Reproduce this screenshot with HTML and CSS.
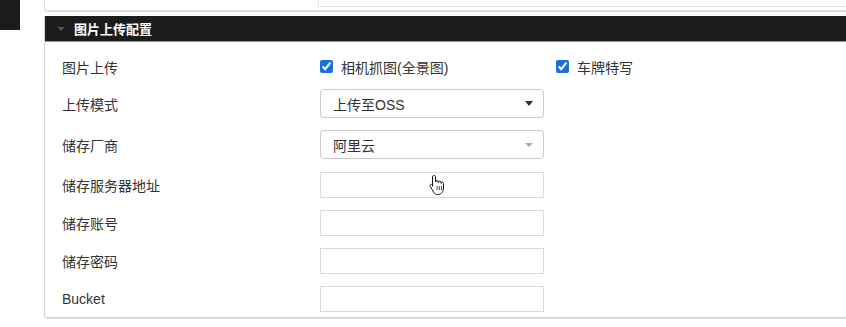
FILE: index.html
```html
<!DOCTYPE html>
<html lang="zh">
<head>
<meta charset="utf-8">
<link rel="stylesheet" href="styles.css">
</head>
<body>
<div class="page">
  <div class="side"><div class="side-block"></div></div>
  <div class="main">
    <div class="prev-panel"><div class="prev-input"></div></div>
    <div class="panel">
      <div class="panel-head"><span class="tri"></span><span class="title">图片上传配置</span></div>
      <div class="panel-body">
        <div class="row row-check">
          <div class="label">图片上传</div>
          <div class="ctrl checks">
            <label class="chk"><input type="checkbox" checked><span>相机抓图(全景图)</span></label>
            <label class="chk"><input type="checkbox" checked><span>车牌特写</span></label>
          </div>
        </div>
        <div class="row">
          <div class="label">上传模式</div>
          <div class="ctrl"><div class="select"><span>上传至OSS</span><span class="caret"></span></div></div>
        </div>
        <div class="row">
          <div class="label">储存厂商</div>
          <div class="ctrl"><div class="select"><span>阿里云</span><span class="caret light"></span></div></div>
        </div>
        <div class="row row-first-input">
          <div class="label">储存服务器地址</div>
          <div class="ctrl"><div class="input"></div></div>
        </div>
        <div class="row">
          <div class="label">储存账号</div>
          <div class="ctrl"><div class="input"></div></div>
        </div>
        <div class="row">
          <div class="label">储存密码</div>
          <div class="ctrl"><div class="input"></div></div>
        </div>
        <div class="row">
          <div class="label">Bucket</div>
          <div class="ctrl"><div class="input"></div></div>
        </div>
      </div>
    </div>
  </div>
</div>
<svg class="cursor" width="16" height="22" viewBox="0 0 16 22">
  <path d="M5 1.5 C5.9 1.5 6.5 2.1 6.5 3 V8 C6.5 7.2 7.1 6.6 7.9 6.6 C8.7 6.6 9.3 7.2 9.3 8 V8.6 C9.3 7.8 9.9 7.2 10.7 7.2 C11.5 7.2 12.1 7.8 12.1 8.6 V9.4 C12.1 8.7 12.6 8.2 13.3 8.2 C14 8.2 14.5 8.7 14.5 9.4 V14 C14.5 17 12.5 20.5 9.2 20.5 H8.6 C6.8 20.5 5.6 19.7 4.6 18.2 L1.3 12.5 C0.8 11.7 1 10.9 1.7 10.5 C2.4 10.1 3.1 10.4 3.6 11 L3.5 12.3 V3 C3.5 2.1 4.1 1.5 5 1.5 Z" fill="#fff" stroke="#111" stroke-width="1"/>
  <path d="M8 12v4M10.3 12v4M12.6 12v4" stroke="#111" stroke-width="0.8"/>
</svg>
</body>
</html>
```
FILE: styles.css
```css
html, body {
  margin: 0;
  padding: 0;
  background: #fff;
  overflow: hidden;
}
body {
  width: 846px;
  height: 327px;
  position: relative;
  font-family: "Liberation Sans", "Noto Sans CJK SC", sans-serif;
  font-size: 14px;
  color: #333;
}
.page {
  display: flex;
  gap: 24px;
}
.side {
  width: 20px;
  flex: none;
}
.side-block {
  width: 20px;
  height: 30px;
  background: #1b1b1b;
}
.main {
  width: 830px;
  flex: none;
}
.prev-panel {
  height: 12px;
  border-left: 1px solid #ddd;
  border-bottom: 2px solid #ddd;
  border-bottom-left-radius: 3px;
  box-sizing: border-box;
  padding-left: 273px;
}
.prev-input {
  height: 7px;
  border-left: 1px solid #e2e2e2;
  border-bottom: 1px solid #e2e2e2;
  box-sizing: border-box;
}
.panel {
  margin-top: 4px;
  border-left: 1px solid #d4d4d4;
  border-bottom: 2px solid #d8d8d8;
  border-bottom-left-radius: 4px;
}
.panel-head {
  height: 25px;
  background: #1c1c1c;
  border-bottom: 1px solid #999;
  display: flex;
  align-items: center;
  padding-left: 12px;
  gap: 9px;
}
.tri {
  width: 0;
  height: 0;
  border-left: 4px solid transparent;
  border-right: 4px solid transparent;
  border-top: 4px solid #555;
}
.title {
  color: #fff;
  font-weight: bold;
  font-size: 13px;
}
.panel-body {
  padding: 14px 0 5px 17px;
  display: flex;
  flex-direction: column;
  gap: 12px;
}
.row {
  display: flex;
  align-items: center;
}
.row-check {
  height: 21px;
}
.row-first-input {
  margin-top: 1px;
}
.label {
  width: 258px;
  flex: none;
  font-size: 14px;
  color: #333;
}
.ctrl {
  width: 224px;
  flex: none;
}
.checks {
  display: flex;
  width: 320px;
}
.chk {
  display: flex;
  align-items: center;
  gap: 8px;
  width: 236px;
  flex: none;
  font-size: 14px;
  color: #333;
}
.chk input {
  margin: 0;
  width: 13px;
  height: 13px;
  accent-color: #1a6fd9;
}
.select {
  height: 29px;
  box-sizing: border-box;
  border: 1px solid #ccc;
  border-radius: 4px;
  display: flex;
  align-items: center;
  justify-content: space-between;
  padding: 0 10px 0 12px;
  font-size: 14px;
  color: #333;
}
.caret {
  width: 0;
  height: 0;
  border-left: 4.5px solid transparent;
  border-right: 4.5px solid transparent;
  border-top: 5px solid #333;
}
.caret.light {
  border-top-color: #aaa;
  border-left-width: 4px;
  border-right-width: 4px;
  border-top-width: 4px;
}
.input {
  height: 26px;
  box-sizing: border-box;
  border: 1px solid #d9d9d9;
}
.cursor {
  position: absolute;
  left: 429px;
  top: 174px;
}
```
